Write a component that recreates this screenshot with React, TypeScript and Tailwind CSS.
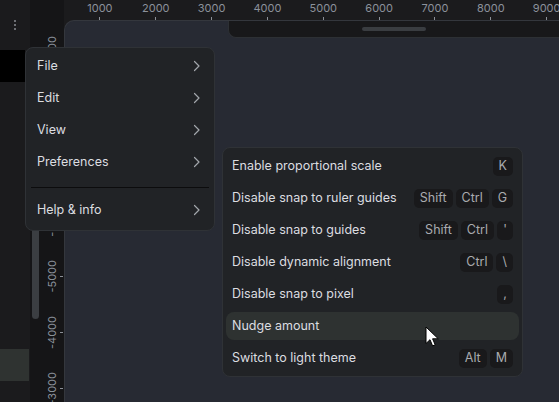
import React from "react";

const topMarks = ["1000", "2000", "3000", "4000", "5000", "6000", "7000", "8000", "9000"];
const sideMarks = ["-9000", "-8000", "-7000", "-6000", "-5000", "-4000", "-3000"];

const mainItems = ["File", "Edit", "View", "Preferences"];

const subItems: { label: string; keys: string[]; active?: boolean }[] = [
  { label: "Enable proportional scale", keys: ["K"] },
  { label: "Disable snap to ruler guides", keys: ["Shift", "Ctrl", "G"] },
  { label: "Disable snap to guides", keys: ["Shift", "Ctrl", "'"] },
  { label: "Disable dynamic alignment", keys: ["Ctrl", "\\"] },
  { label: "Disable snap to pixel", keys: [","] },
  { label: "Nudge amount", keys: [], active: true },
  { label: "Switch to light theme", keys: ["Alt", "M"] },
];

function Chevron() {
  return (
    <svg width="8" height="12" viewBox="0 0 8 12" fill="none" className="shrink-0">
      <path d="M1.5 1.5 6 6l-4.5 4.5" stroke="#a3a6ab" strokeWidth="1.2" strokeLinecap="round" strokeLinejoin="round" />
    </svg>
  );
}

function Cursor() {
  return (
    <svg width="14" height="22" viewBox="0 0 14 22" className="absolute left-[425px] top-[326px]">
      <path
        d="M1 1v16.5l4-3.8 2.6 6.2 2.6-1.1-2.6-6H13.3L1 1z"
        fill="#ffffff"
        stroke="#000000"
        strokeWidth="1"
        strokeLinejoin="round"
      />
    </svg>
  );
}

export default function App() {
  return (
    <div className="relative w-[559px] h-[402px] overflow-hidden bg-[#1b1b1d] flex font-['Inter',sans-serif]">
      {/* Left panel */}
      <div className="w-[30px] h-full flex flex-col shrink-0">
        <div className="h-[50px] flex justify-center pt-[20px]">
          <div className="flex flex-col gap-[2px] items-center">
            <span className="w-[2px] h-[2px] bg-[#8a8d92] rounded-full" />
            <span className="w-[2px] h-[2px] bg-[#8a8d92] rounded-full" />
            <span className="w-[2px] h-[2px] bg-[#8a8d92] rounded-full" />
          </div>
        </div>
        <div className="w-[25px] h-[32px] bg-black" />
        <div className="flex-1" />
        <div className="w-[29px] h-[32px] bg-[#2f3331] mb-[21px]" />
      </div>

      {/* Vertical ruler strip */}
      <div className="w-[34px] h-full bg-[#151517] flex shrink-0">
        <div className="w-[10px] flex justify-center pt-[190px]">
          <div className="w-[7px] h-[129px] rounded-full bg-[#3b3e42]" />
        </div>
        <div className="flex-1 flex flex-col pt-[24px]">
          {sideMarks.map((m) => (
            <div key={m} className="h-[56px] flex items-center shrink-0">
              <div className="w-[20px] flex justify-center pl-[4px]">
                <span className="[writing-mode:vertical-rl] rotate-180 text-[11px] leading-none text-[#8b919b] whitespace-nowrap">
                  {m}
                </span>
              </div>
              <div className="w-[3px] h-px bg-[#8b8f96]" />
            </div>
          ))}
        </div>
      </div>

      {/* Right: top ruler + canvas */}
      <div className="flex-1 min-w-0 overflow-hidden flex flex-col">
        <div className="h-[20px] flex pl-[8px]">
          {topMarks.map((m) => (
            <div key={m} className="w-[55.85px] shrink-0 flex flex-col items-center">
              <span className="text-[11px] leading-none mt-[3px] text-[#8b919b]">{m}</span>
              <div className="w-px h-[3px] mt-[3px] bg-[#8b8f96]" />
            </div>
          ))}
        </div>
        <div className="flex-1 bg-[#272a33] rounded-tl-[10px] border-t border-l border-[#34373d] flex justify-end items-start">
          <div className="w-[331px] h-[17px] bg-[#18181a] rounded-bl-[8px] border-l border-b border-[#2d3034] flex justify-center items-center">
            <div className="w-[64px] h-[4px] rounded-full bg-[#3a3d41]" />
          </div>
        </div>
      </div>

      {/* Main menu */}
      <div className="absolute left-[25px] top-[47px] w-[190px] bg-[#212326] border border-[#2f3236] rounded-[8px] px-[4px] pt-[4px] pb-[6px] flex flex-col gap-[4px] text-[12.5px] text-[#dcdde0]">
        {mainItems.map((t) => (
          <div key={t} className="h-[28px] flex items-center justify-between pl-[7px] pr-[9px]">
            <span>{t}</span>
            <Chevron />
          </div>
        ))}
        <div className="h-px bg-[#0c0c0d] mx-px mt-[7px] mb-[4px]" />
        <div className="h-[28px] flex items-center justify-between pl-[7px] pr-[9px]">
          <span>Help &amp; info</span>
          <Chevron />
        </div>
      </div>

      {/* Submenu */}
      <div className="absolute left-[222px] top-[147px] w-[301px] bg-[#212326] border border-[#2f3236] rounded-[8px] px-[3px] pt-[4px] pb-[4px] flex flex-col gap-[4px] text-[12.5px] text-[#dcdde0]">
        {subItems.map((it) => (
          <div
            key={it.label}
            className={`h-[28px] flex items-center justify-between pl-[6px] pr-[6px] rounded-[8px] ${
              it.active ? "bg-[#2e3231]" : ""
            }`}
          >
            <span>{it.label}</span>
            <div className="flex gap-[3px]">
              {it.keys.map((k) => (
                <span
                  key={k}
                  className="h-[19px] min-w-[16px] px-[6px] flex items-center justify-center rounded-[5px] bg-[#19191b] text-[12.5px] text-[#a9abaf]"
                >
                  {k}
                </span>
              ))}
            </div>
          </div>
        ))}
      </div>

      <Cursor />
    </div>
  );
}
